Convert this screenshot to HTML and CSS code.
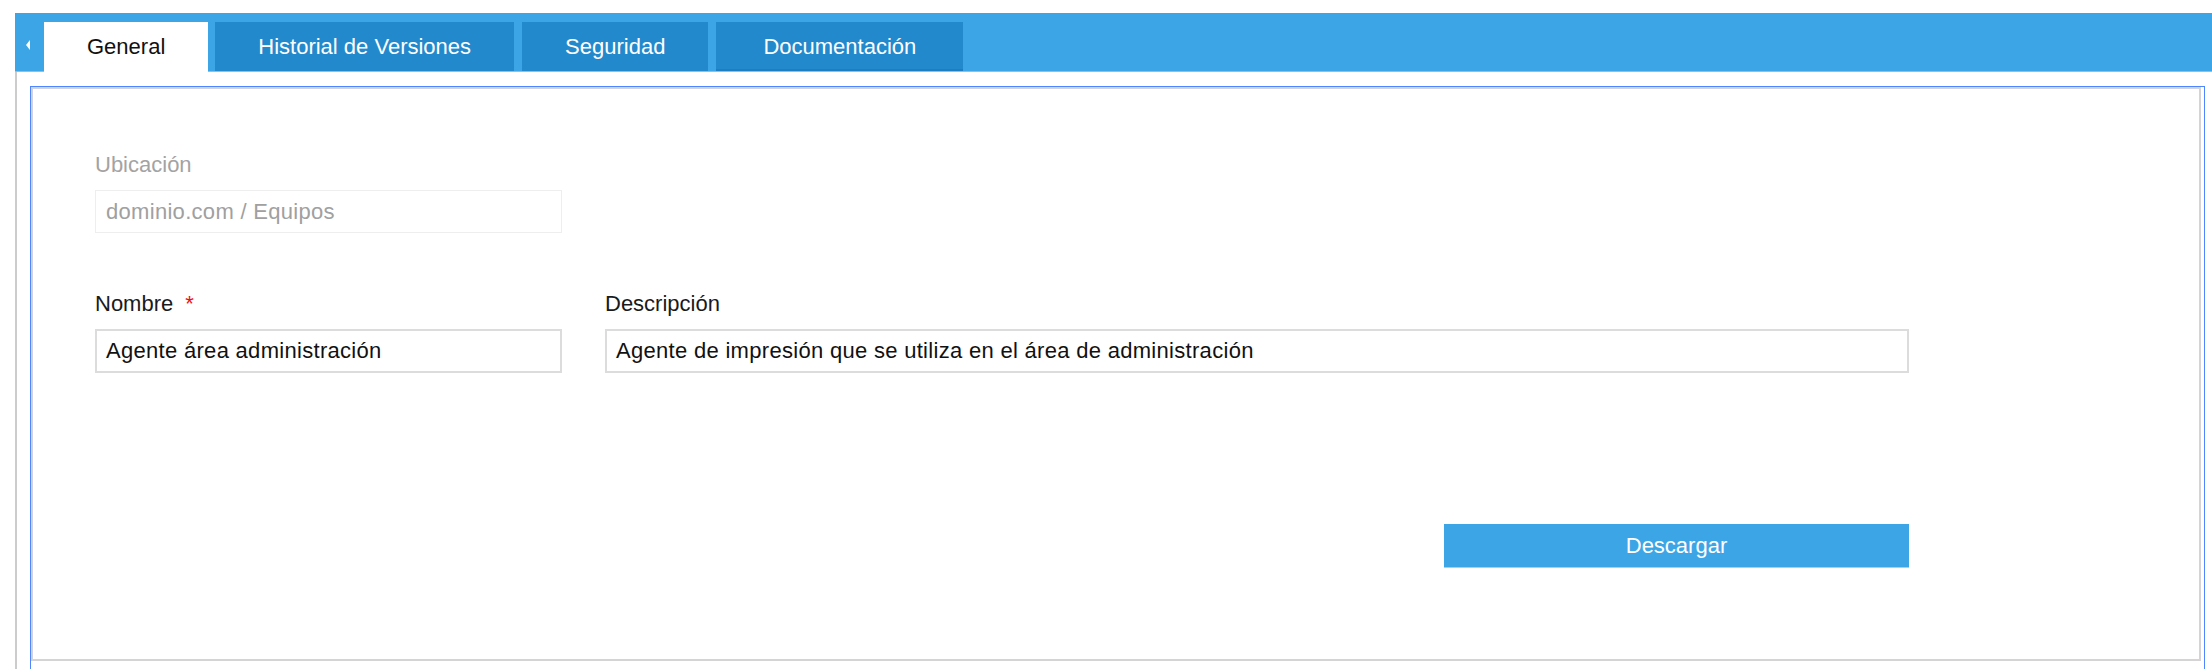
FILE: index.html
```html
<!DOCTYPE html>
<html lang="es">
<head>
<meta charset="utf-8">
<title>General</title>
<link rel="stylesheet" href="styles.css">
</head>
<body>
<div class="page">
  <div class="tabbar">
    <div class="tab-scroll"><span class="arrow-left"></span></div>
    <div class="tab tab-active">General</div>
    <div class="tab">Historial de Versiones</div>
    <div class="tab">Seguridad</div>
    <div class="tab tab-hover">Documentación</div>
  </div>
  <div class="tab-body">
    <div class="focus-frame">
      <div class="panel">
        <div class="field field-disabled">
          <div class="label">Ubicación</div>
          <div class="input input-disabled">dominio.com / Equipos</div>
        </div>
        <div class="form-row">
          <div class="field">
            <div class="label">Nombre <span class="required">*</span></div>
            <div class="input">Agente área administración</div>
          </div>
          <div class="field">
            <div class="label">Descripción</div>
            <div class="input">Agente de impresión que se utiliza en el área de administración</div>
          </div>
        </div>
        <div class="actions">
          <div class="button">Descargar</div>
        </div>
      </div>
    </div>
  </div>
</div>
</body>
</html>
```

FILE: styles.css
```css
html, body {
  margin: 0;
  padding: 0;
  height: 100%;
  overflow: hidden;
  background: #ffffff;
}

body {
  font-family: "Liberation Sans", Arial, sans-serif;
  font-size: 22px;
  color: #1a1a1a;
}

.page {
  padding-top: 13px;
  padding-left: 15px;
}

.tabbar {
  display: flex;
  align-items: flex-end;
  height: 58px;
  background: #3ca5e5;
  border-bottom: 1px solid #7fc5f1;
}

.tab-scroll {
  width: 29px;
  height: 49px;
  display: flex;
  align-items: center;
  justify-content: center;
  margin-top: -4px;
}

.arrow-left {
  width: 0;
  height: 0;
  border-top: 5px solid transparent;
  border-bottom: 5px solid transparent;
  border-right: 4px solid #ffffff;
  margin-left: -4px;
  margin-bottom: 4px;
}

.tab {
  height: 49px;
  box-sizing: border-box;
  padding: 0 43px;
  margin-right: 8px;
  background: #2389cd;
  color: #ffffff;
  display: flex;
  align-items: center;
  justify-content: center;
  white-space: nowrap;
  line-height: 26px;
}

.tab-active {
  height: 50px;
  margin-bottom: -1px;
  margin-right: 7px;
  background: #ffffff;
  color: #111111;
  padding-bottom: 1px;
}

.tab-hover {
  padding: 0 47px;
  border-bottom: 2px solid #1d7fc2;
  padding-top: 2px;
}

.tab-body {
  border-left: 2px solid #cccccc;
  padding: 14px 7px 0 13px;
}

.focus-frame {
  border: 1px solid #4f86ff;
  border-bottom: none;
  padding-right: 3px;
  padding-bottom: 40px;
}

.panel {
  border: 2px solid #d4d4d4;
  padding: 63px 0 91px 62px;
}

.field {
  display: flex;
  flex-direction: column;
}

.field-disabled {
  width: 467px;
  margin-bottom: 58px;
}

.label {
  line-height: 26px;
  height: 26px;
  margin-bottom: 12px;
  color: #1a1a1a;
  white-space: nowrap;
}

.field-disabled .label {
  color: #a3a3a3;
}

.required {
  color: #ee1111;
  margin-left: 6px;
}

.input {
  height: 44px;
  box-sizing: border-box;
  border: 2px solid #dcdcdc;
  padding: 0 9px;
  display: flex;
  align-items: center;
  color: #111111;
  white-space: nowrap;
  overflow: hidden;
  letter-spacing: 0.3px;
}

.input-disabled {
  height: 43px;
  border: 1px solid #eeeeee;
  padding-left: 10px;
  color: #a0a0a0;
}

.form-row {
  display: grid;
  grid-template-columns: 467px 1304px;
  column-gap: 43px;
  width: 1814px;
}

.actions {
  width: 1814px;
  display: flex;
  justify-content: flex-end;
  margin-top: 151px;
}

.button {
  width: 465px;
  height: 44px;
  box-sizing: border-box;
  background: #3ca5e6;
  border-bottom: 1px solid #9cd2f5;
  color: #ffffff;
  display: flex;
  align-items: center;
  justify-content: center;
}
```
